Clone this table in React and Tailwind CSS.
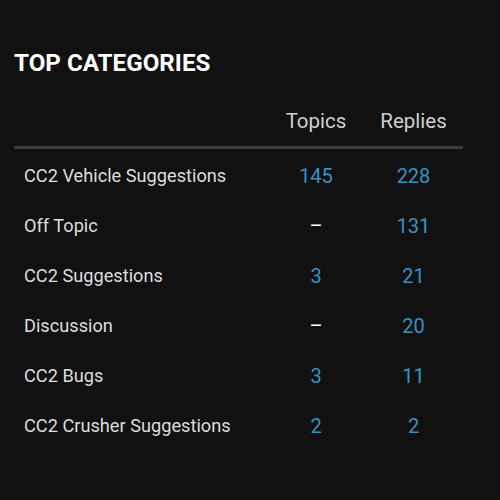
import React from "react";

const rows = [
  { name: "CC2 Vehicle Suggestions", topics: "145", replies: "228" },
  { name: "Off Topic", topics: null, replies: "131" },
  { name: "CC2 Suggestions", topics: "3", replies: "21" },
  { name: "Discussion", topics: null, replies: "20" },
  { name: "CC2 Bugs", topics: "3", replies: "11" },
  { name: "CC2 Crusher Suggestions", topics: "2", replies: "2" },
];

function Count({ value }) {
  if (!value) return <span className="text-white">–</span>;
  return <span className="text-[#3892c2]">{value}</span>;
}

export default function App() {
  return (
    <div className="w-[500px] h-[500px] bg-[#111111] font-['Roboto',sans-serif] overflow-hidden">
      <div className="pt-[47px] pl-[14px] w-[463px]">
        <h2 className="text-[24.2px] font-bold text-white leading-[32px]">
          TOP CATEGORIES
        </h2>

        {/* Header */}
        <div className="flex mt-[18px] h-[52px] items-center border-b-[3px] border-[#3d3d3d] text-[20.5px] text-[#cfcfcf]">
          <div className="flex-1" />
          <div className="w-[96px] text-center">Topics</div>
          <div className="w-[99px] text-center">Replies</div>
        </div>

        {/* Rows */}
        <div className="pt-[2px]">
          {rows.map((r) => (
            <div key={r.name} className="flex h-[50px] items-center text-[18.2px]">
              <div className="flex-1 pl-[10px] text-[#dddddd]">{r.name}</div>
              <div className="w-[96px] text-center text-[20px]">
                <Count value={r.topics} />
              </div>
              <div className="w-[99px] text-center text-[20px]">
                <Count value={r.replies} />
              </div>
            </div>
          ))}
        </div>
      </div>
    </div>
  );
}
